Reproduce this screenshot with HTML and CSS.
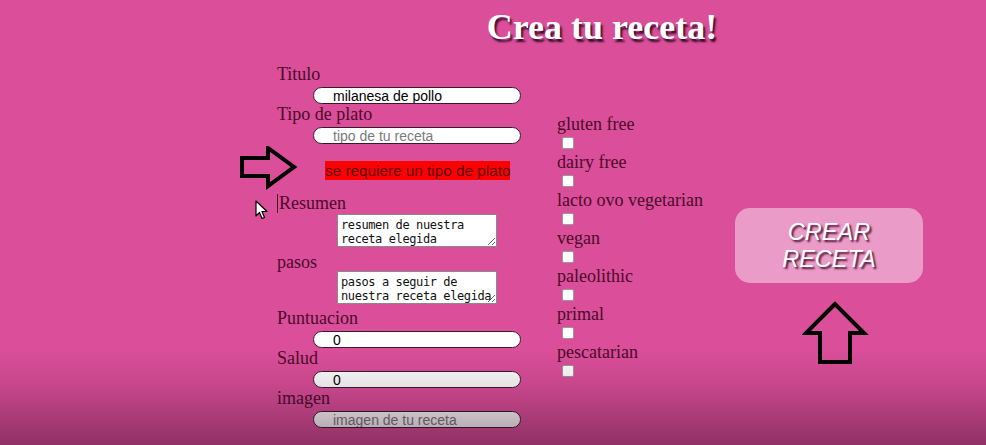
FILE: index.html
```html
<!DOCTYPE html>
<html lang="es">
<head>
<meta charset="utf-8">
<title>Crea tu receta</title>
<link rel="stylesheet" href="styles.css">
</head>
<body>
<div class="page">
  <h1 class="title">Crea tu receta!</h1>
  <div class="content">
    <form class="form-col">
      <label class="lbl">Titulo</label>
      <input class="field" type="text" value="milanesa de pollo">
      <label class="lbl">Tipo de plato</label>
      <input class="field field-gap" type="text" placeholder="tipo de tu receta">
      <div class="error-row">
        <svg class="arrow-right" width="60" height="44" viewBox="0 0 60 44">
          <polygon points="3,12 29,12 29,2 55,21 29,40 29,30 3,30" fill="none" stroke="#000" stroke-width="4" stroke-linejoin="miter"/>
        </svg>
        <span class="error">se requiere un tipo de plato</span>
      </div>
      <label class="lbl lbl-resumen"><span class="caret"></span>Resumen</label>
      <textarea class="area">resumen de nuestra receta elegida</textarea>
      <label class="lbl lbl-pasos">pasos</label>
      <textarea class="area area-pasos">pasos a seguir de nuestra receta elegida</textarea>
      <label class="lbl lbl-punt">Puntuacion</label>
      <input class="field" type="text" value="0">
      <label class="lbl">Salud</label>
      <input class="field" type="text" value="0">
      <label class="lbl">imagen</label>
      <input class="field" type="text" placeholder="imagen de tu receta">
    </form>
    <div class="diet-col">
      <div class="diet"><span class="lbl">gluten free</span><input class="check" type="checkbox"></div>
      <div class="diet"><span class="lbl">dairy free</span><input class="check" type="checkbox"></div>
      <div class="diet"><span class="lbl">lacto ovo vegetarian</span><input class="check" type="checkbox"></div>
      <div class="diet"><span class="lbl">vegan</span><input class="check" type="checkbox"></div>
      <div class="diet"><span class="lbl">paleolithic</span><input class="check" type="checkbox"></div>
      <div class="diet"><span class="lbl">primal</span><input class="check" type="checkbox"></div>
      <div class="diet"><span class="lbl">pescatarian</span><input class="check" type="checkbox"></div>
    </div>
    <div class="action-col">
      <button class="create" type="button">CREAR<br>RECETA</button>
      <svg class="arrow-up" width="68" height="66" viewBox="0 0 68 66">
        <polygon points="33,3 4,32 18,32 18,61 48,61 48,32 62,32" fill="none" stroke="#000" stroke-width="4" stroke-linejoin="miter"/>
      </svg>
    </div>
  </div>
</div>
<svg class="cursor" width="14" height="20" viewBox="0 0 14 20">
  <path d="M1,1 L1,16 L4.5,12.5 L7,18.5 L9.5,17.5 L7,11.5 L12,11.5 Z" fill="#fff" stroke="#000" stroke-width="1.2" stroke-linejoin="round"/>
</svg>
<div class="shade"></div>
</body>
</html>
```
FILE: styles.css
```css
html, body {
  margin: 0;
  padding: 0;
}
body {
  background: #db4e9a;
  width: 986px;
  height: 445px;
  overflow: hidden;
  font-family: "Liberation Serif", "DejaVu Serif", serif;
}
.page {
  display: flex;
  flex-direction: column;
}
.title {
  margin: 0;
  padding: 7px 0 0 218px;
  text-align: center;
  font-family: "Liberation Serif", serif;
  font-weight: bold;
  font-size: 36px;
  line-height: 40px;
  color: #fff;
  text-shadow: 2px 3px 2px #3a0f2a;
}
.content {
  display: flex;
  align-items: flex-start;
  padding-left: 277px;
  margin-top: 17px;
}
.form-col {
  display: flex;
  flex-direction: column;
  align-items: flex-start;
  width: 280px;
  margin: 0;
}
.lbl {
  display: block;
  font-size: 18px;
  line-height: 20px;
  height: 20px;
  color: #4a0b2a;
  white-space: nowrap;
}
.field {
  box-sizing: border-box;
  width: 208px;
  height: 17px;
  margin: 3px 0 0 36px;
  padding: 0 0 0 19px;
  border: 1px solid #3a1a2a;
  border-radius: 9px;
  background: #fff;
  font-family: "Liberation Sans", Arial, sans-serif;
  font-size: 14px;
  color: #000;
  outline: none;
}
.field::placeholder {
  color: #7a7a7a;
}
.error-row {
  display: flex;
  align-items: center;
  margin: 2px 0 0 -38px;
  gap: 26px;
}
.arrow-right {
  display: block;
}
.error {
  background: #ff0000;
  color: #5a0410;
  font-family: "Liberation Sans", Arial, sans-serif;
  font-size: 15.3px;
  line-height: 19px;
  margin-top: 4px;
}
.lbl-resumen {
  margin-top: 3px;
  display: flex;
  align-items: center;
}
.caret {
  display: inline-block;
  width: 1px;
  height: 19px;
  background: #3a0a20;
  margin-right: 1px;
}
.area {
  box-sizing: border-box;
  width: 160px;
  height: 33px;
  margin: 1px 0 0 60px;
  padding: 3px 1px 2px 3px;
  border: 1px solid #8a8a8a;
  background: #fff;
  font-family: "DejaVu Sans Mono", "Liberation Mono", monospace;
  font-size: 12px;
  line-height: 14px;
  letter-spacing: -0.4px;
  color: #111;
  resize: both;
  overflow: hidden;
}
.area-pasos {
  margin-top: -1px;
}
.lbl-pasos {
  margin-top: 5px;
}
.lbl-punt {
  margin-top: 4px;
}
.diet-col {
  display: flex;
  flex-direction: column;
  width: 178px;
  margin-top: 50px;
}
.diet {
  display: flex;
  flex-direction: column;
  align-items: flex-start;
  height: 38px;
}
.check {
  appearance: none;
  -webkit-appearance: none;
  box-sizing: border-box;
  width: 12px;
  height: 12px;
  margin: 3px 0 0 5px;
  border: 1px solid #9a9a9a;
  border-radius: 2px;
  background: #fff;
}
.action-col {
  display: flex;
  flex-direction: column;
  align-items: flex-start;
  margin-top: 144px;
}
.create {
  width: 188px;
  height: 75px;
  border: none;
  border-radius: 15px;
  background: #eb9bc7;
  color: #fff;
  font-family: "Liberation Sans", Arial, sans-serif;
  font-style: italic;
  font-size: 23.5px;
  line-height: 27px;
  text-shadow: 2px 2px 2px #4a1030;
  padding: 0;
}
.arrow-up {
  display: block;
  margin: 18px 0 0 67px;
}
.cursor {
  position: absolute;
  left: 255px;
  top: 200px;
}
.shade {
  position: fixed;
  left: 0;
  right: 0;
  bottom: 0;
  height: 95px;
  background: linear-gradient(to bottom, rgba(40, 10, 30, 0) 0%, rgba(40, 10, 30, 0.12) 40%, rgba(40, 10, 30, 0.42) 100%);
  pointer-events: none;
}
```
